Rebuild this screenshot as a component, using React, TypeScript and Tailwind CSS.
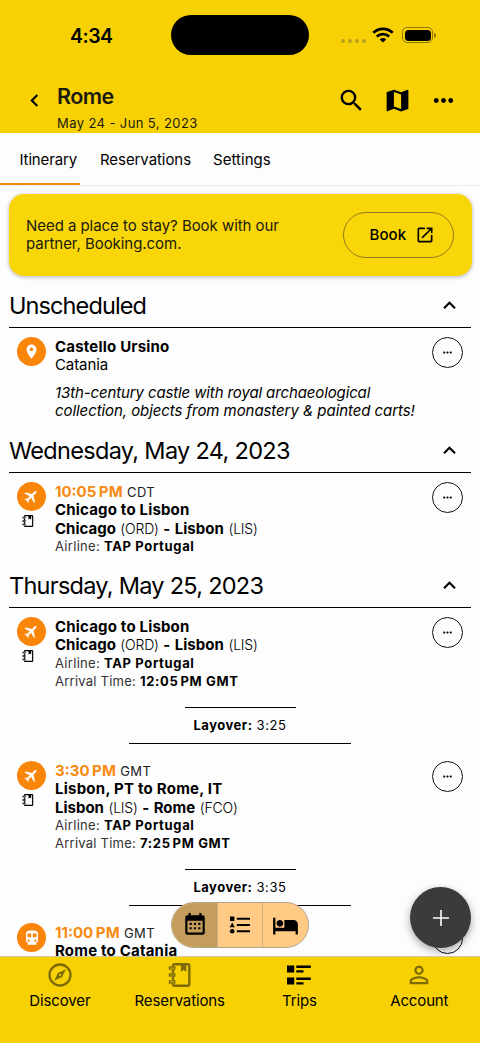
import React, { type ReactNode } from "react";
import {
  MdChevronLeft,
  MdDirectionsTransit,
  MdFlight,
  MdHotel,
  MdKeyboardArrowUp,
  MdLaunch,
  MdLocationOn,
  MdMap,
  MdMoreHoriz,
  MdPersonOutline,
  MdSearch,
} from "react-icons/md";

function NotebookIcon({ className }: { className?: string }) {
  return (
    <svg viewBox="0 0 24 24" className={className} fill="none" stroke="currentColor" strokeWidth="2">
      <path d="M6 4.5V4a1.2 1.2 0 0 1 1.2-1.2h11.6A1.2 1.2 0 0 1 20 4v16a1.2 1.2 0 0 1-1.2 1.2H7.200A1.2 1.2 0 0 1 6 20v-.5M6 7.500v3M6 13.500v3" />
      <path d="M3 5.200h4.500v1.800H3zM3 11.100h4.500v1.800H3zM3 17h4.500v1.800H3z" strokeWidth="1.200" />
      <path d="M12.800 2.500h4.600v7l-2.300-1.900-2.300 1.900z" fill="currentColor" stroke="none" />
    </svg>
  );
}

function CompassIcon({ className }: { className?: string }) {
  return (
    <svg viewBox="0 0 24 24" className={className} fill="currentColor">
      <path d="M7,17L10.2,10.2L17,7L13.8,13.8L7,17M12,11.1A0.9,0.9 0 0,0 11.1,12A0.9,0.9 0 0,0 12,12.9A0.9,0.9 0 0,0 12.9,12A0.9,0.9 0 0,0 12,11.1M12,2A10,10 0 0,1 22,12A10,10 0 0,1 12,22A10,10 0 0,1 2,12A10,10 0 0,1 12,2M12,4A8,8 0 0,0 4,12A8,8 0 0,0 12,20A8,8 0 0,0 20,12A8,8 0 0,0 12,4Z" />
    </svg>
  );
}

function CalendarIcon({ className }: { className?: string }) {
  return (
    <svg viewBox="0 0 24 24" className={className} fill="currentColor">
      <path d="M9,10V12H7V10H9M13,10V12H11V10H13M17,10V12H15V10H17M19,3A2,2 0 0,1 21,5V19A2,2 0 0,1 19,21H5C3.89,21 3,20.1 3,19V5A2,2 0 0,1 5,3H6V1H8V3H16V1H18V3H19M19,19V8H5V19H19M9,14V16H7V14H9M13,14V16H11V14H13M17,14V16H15V14H17Z" />
    </svg>
  );
}

function ShapeListIcon({ className }: { className?: string }) {
  return (
    <svg viewBox="0 0 20 18" className={className} fill="currentColor">
      <path d="M0 0.5h4.4v4.4H0zM2.2 6.600l2.6 4.600H-.4z" />
      <circle cx="2.2" cy="15.3" r="2.3" />
      <path d="M6.8 1.700h13.200v2H6.800zM6.800 8h13.200v2H6.800zM6.800 14.300h13.200v2H6.800z" />
    </svg>
  );
}

function TripsIcon({ className }: { className?: string }) {
  return (
    <svg viewBox="0 0 24 20" className={className} fill="currentColor">
      <path d="M0 .5h7.200v7H0zM0 12.500h7.200v7H0zM9.300.5h14.500v2.400H9.300zM9.300 5.300h7.200v2.200H9.300zM9.300 12.500h14.500v2.400H9.300zM9.300 17.300h7.200v2.200H9.300z" />
    </svg>
  );
}

function WifiIcon({ className }: { className?: string }) {
  return (
    <svg viewBox="0 0 22 16" className={className} fill="none" stroke="currentColor" strokeWidth="2.7">
      <path d="M1.3 5.7a14 14 0 0 1 19.4 0M4.8 9.6a9 9 0 0 1 12.4 0" />
      <path d="M11 15.6l-3.2-3.2a4.6 4.6 0 0 1 6.400 0z" fill="currentColor" stroke="none" />
    </svg>
  );
}

function StatusBar() {
  return (
    <div className="flex h-[70px] items-center">
      <div className="w-[171px] pt-[3px] pl-[70px] text-[19.5px] font-semibold tracking-[-0.5px]">4:34</div>
      <div className="h-10 w-[138px] rounded-full bg-black" />
      <div className="flex h-4 flex-1 items-center pl-8">
        <div className="mt-[11px] flex gap-[3px] text-[#b9a01f]">
          <i className="size-[4px] rounded-full bg-current" />
          <i className="size-[4px] rounded-full bg-current" />
          <i className="size-[4px] rounded-full bg-current" />
          <i className="size-[4px] rounded-full bg-current" />
        </div>
        <WifiIcon className="ml-[6px] h-4 w-[22px]" />
        <div className="ml-[8px] flex h-4 w-[31px] rounded-[5px] border border-[#8f7906] p-[1.5px]">
          <div className="flex-1 rounded-[3.5px] bg-black" />
        </div>
        <div className="ml-px h-[5px] w-[1.5px] rounded-r-full bg-[#8f7906]" />
      </div>
    </div>
  );
}

function MoreButton() {
  return (
    <button className="mt-[9px] flex size-[31px] shrink-0 items-center justify-center rounded-full border-[1.3px] border-[#111]">
      <MdMoreHoriz className="size-[13px]" />
    </button>
  );
}

function DaySection({ title, tracking, children }: { title: string; tracking: string; children: ReactNode }) {
  return (
    <section>
      <div className="mx-[9px] flex h-11 items-center justify-between border-b border-black">
        <h2 className={`pt-px text-[23.5px] ${tracking}`}>{title}</h2>
        <MdKeyboardArrowUp className="mr-[9.5px] size-[25px]" />
      </div>
      {children}
    </section>
  );
}

function Entry({ icon, note, height, children }: { icon: ReactNode; note?: boolean; height: string; children: ReactNode }) {
  return (
    <div className={`flex pr-[17px] pl-[17px] ${height}`}>
      <div className="flex w-[29px] flex-col items-center pt-[9px]">
        <div className="flex size-[29px] items-center justify-center rounded-full bg-[#f98509] text-white">{icon}</div>
        {note && <NotebookIcon className="mt-[3px] mr-[8px] size-[14px]" />}
      </div>
      <div className="min-w-0 flex-1 pt-[10px] pl-[9px] text-[15px] leading-[18.4px] whitespace-nowrap">{children}</div>
      <MoreButton />
    </div>
  );
}

const plane = <MdFlight className="size-[17px] rotate-45" />;

function Time({ time, zone }: { time: string; zone: string }) {
  return (
    <div>
      <span className="font-bold text-[#f68a12]">
        {time}
        <span className="ml-[2.5px] tracking-[0.3px]">PM</span>
      </span>
      <span className="ml-[4px] text-[13px] tracking-[0.35px] text-[#222]">{zone}</span>
    </div>
  );
}

function Route({ from, fromCode, to, toCode }: { from: string; fromCode: string; to: string; toCode: string }) {
  return (
    <div className="flex gap-[4.500px] font-bold">
      <span>{from}</span>
      <span className="text-[14px] font-light tracking-[-0.2px]">{fromCode}</span>
      <span>-</span>
      <span className="tracking-[0.05px]">{to}</span>
      <span className="text-[14px] font-light tracking-[-0.2px]">{toCode}</span>
    </div>
  );
}

function Airline() {
  return (
    <div className="text-[13px] leading-[17.8px] text-[#333]">
      <span className="tracking-[0.3px]">Airline:</span>
      <b className="ml-[4px] tracking-[0.65px] text-black">TAP Portugal</b>
    </div>
  );
}

function Arrival({ time }: { time: string }) {
  return (
    <div className="text-[13px] leading-[17.8px] text-[#333]">
      <span className="tracking-[0.24px]">Arrival Time:</span>
      <b className="ml-[4px] tracking-[0.65px] text-black">
        {time}
        <span className="ml-[2px]">PM GMT</span>
      </b>
    </div>
  );
}

function Layover({ time }: { time: string }) {
  return (
    <div className="flex h-[45px] flex-col items-center">
      <div className="h-px w-[111px] bg-black" />
      <div className="flex h-[35px] items-center text-[13px]">
        <b className="tracking-[0.51px]">Layover:</b>
        <span className="ml-[4px] tracking-[0.6px]">{time}</span>
      </div>
      <div className="h-px w-[222px] bg-black" />
    </div>
  );
}

function NavItem({ icon, label, active }: { icon: ReactNode; label: string; active?: boolean }) {
  return (
    <div className="flex w-[119.800px] flex-col items-center pt-[3px]">
      <div className={`flex h-[29px] items-center ${active ? "text-black" : "text-[#7f6b05]"}`}>{icon}</div>
      <span className="mt-[1px] text-[15px] leading-[22px] tracking-[-0.13px]">{label}</span>
    </div>
  );
}

export default function App() {
  return (
    <div className="relative h-[1043px] w-[480px] overflow-hidden bg-[#fdfdfd] font-[Inter,sans-serif] text-black">
      <header className="h-[133px] bg-[#f7d103]">
        <StatusBar />
        <div className="flex pt-[14px]">
          <MdChevronLeft className="mt-[3.5px] ml-[22px] size-[25px]" />
          <div className="ml-[10px] flex-1">
            <h1 className="text-[21.5px] leading-[25px] font-semibold tracking-[-0.6px] text-[#1c1a10]">Rome</h1>
            <p className="mt-[4px] text-[13px] leading-[20px] tracking-[0.4px] text-[#1c1a10]">May 24 - Jun 5, 2023</p>
          </div>
          <div className="mr-[22px] flex gap-[17px] pt-[1.5px]">
            <MdSearch className="size-[29px]" />
            <MdMap className="size-[29px]" />
            <MdMoreHoriz className="size-[29px]" />
          </div>
        </div>
      </header>

      <nav className="flex h-[53px] border-b border-[#ececec] text-[15px]">
        <div className="-mb-px h-[52px] w-20 border-b-2 border-[#f78a16] pl-[19.5px] leading-[53px] tracking-[-0.14px]">Itinerary</div>
        <div className="w-[113px] pl-5 leading-[53px] tracking-[-0.07px]">Reservations</div>
        <div className="pl-5 leading-[53px] tracking-[0.05px]">Settings</div>
      </nav>

      <main>
        <div className="mx-[8.5px] mt-2 flex h-[82px] items-center justify-between rounded-[15px] bg-[#f9d607] pr-[18px] pl-[17.5px] shadow-[0_1px_4px_rgba(0,0,0,0.3)]">
          <p className="text-[15px] leading-[18.5px] tracking-[-0.05px] text-[#1c1a10]">
            Need a place to stay? Book with our
            <br />
            partner, Booking.com.
          </p>
          <button className="flex h-[46px] w-[111px] items-center rounded-full border border-[#8f7b1c] pl-[26px] text-[15px] font-medium tracking-[0.1px]">
            Book
            <MdLaunch className="ml-[9px] size-5" />
          </button>
        </div>

        <div className="pt-2">
          <DaySection title="Unscheduled" tracking="tracking-[-0.9px]">
            <Entry icon={<MdLocationOn className="size-[17px]" />} height="h-[101px]">
              <div className="font-bold tracking-[0.2px]">Castello Ursino</div>
              <div className="tracking-[-0.1px]">Catania</div>
              <p className="mt-[9px] italic">
                <span className="tracking-[-0.12px]">13th-century castle with royal archaeological</span>
                <br />
                <span className="tracking-[-0.07px]">collection, objects from monastery &amp; painted carts!</span>
              </p>
            </Entry>
          </DaySection>

          <DaySection title="Wednesday, May 24, 2023" tracking="tracking-[-0.68px]">
            <Entry icon={plane} note height="h-[91px]">
              <Time time="10:05" zone="CDT" />
              <div className="font-bold tracking-[0.18px]">Chicago to Lisbon</div>
              <Route from="Chicago" fromCode="(ORD)" to="Lisbon" toCode="(LIS)" />
              <Airline />
            </Entry>
          </DaySection>

          <DaySection title="Thursday, May 25, 2023" tracking="tracking-[-0.73px]">
            <Entry icon={plane} note height="h-[99px]">
              <div className="font-bold tracking-[0.18px]">Chicago to Lisbon</div>
              <Route from="Chicago" fromCode="(ORD)" to="Lisbon" toCode="(LIS)" />
              <Airline />
              <Arrival time="12:05" />
            </Entry>
            <Layover time="3:25" />
            <Entry icon={plane} note height="h-[117px]">
              <Time time="3:30" zone="GMT" />
              <div className="font-bold tracking-[0.24px]">Lisbon, PT to Rome, IT</div>
              <Route from="Lisbon" fromCode="(LIS)" to="Rome" toCode="(FCO)" />
              <Airline />
              <Arrival time="7:25" />
            </Entry>
            <Layover time="3:35" />
            <Entry icon={<MdDirectionsTransit className="size-[18px]" />} height="h-[90px]">
              <Time time="11:00" zone="GMT" />
              <div className="font-bold tracking-[0.2px]">Rome to Catania</div>
            </Entry>
          </DaySection>
        </div>
      </main>

      <div className="absolute top-[902px] left-[171px] flex h-[46px] w-[138px] overflow-hidden rounded-full border border-[#b5a48d] bg-[#ffcb84]">
        <div className="flex w-[45px] items-center justify-center bg-[#c49d5c]">
          <CalendarIcon className="size-[26px]" />
        </div>
        <div className="flex w-[46px] items-center justify-center border-x border-[#c9ad85]">
          <ShapeListIcon className="h-[18px] w-[20px] overflow-visible" />
        </div>
        <div className="flex flex-1 items-center justify-center">
          <MdHotel className="size-[27px]" />
        </div>
      </div>

      <button className="absolute top-[887px] left-[410px] flex size-[61px] items-center justify-center rounded-full bg-[#3b3b3b] text-white shadow-[0_3px_8px_rgba(0,0,0,0.35)]">
        <svg viewBox="0 0 16 16" className="size-4" fill="none" stroke="currentColor" strokeWidth="1.600">
          <path d="M8 0v16M0 8h16" />
        </svg>
      </button>

      <footer className="absolute inset-x-0 bottom-0 flex h-[87px] border-t border-[#d3c9a0] bg-[#f7d103]">
        <NavItem icon={<CompassIcon className="size-7" />} label="Discover" />
        <NavItem icon={<NotebookIcon className="size-7" />} label="Reservations" />
        <NavItem icon={<TripsIcon className="h-5 w-6" />} label="Trips" active />
        <NavItem icon={<MdPersonOutline className="size-7" />} label="Account" />
      </footer>
    </div>
  );
}
